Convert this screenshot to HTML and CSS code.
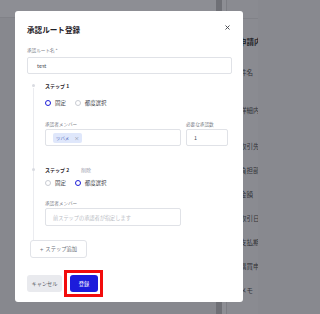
FILE: index.html
```html
<!DOCTYPE html>
<html lang="ja">
<head>
<meta charset="utf-8">
<link rel="stylesheet" href="styles.css">
</head>
<body>
<div class="page">
  <div class="main"><div class="main-top"></div></div>
  <div class="scroll"></div>
  <div class="gutter"></div>
  <aside class="panel">
    <div class="panel-top"></div>
    <div class="panel-title">申請内容</div>
    <div class="panel-row r1">件名</div>
    <div class="panel-row r2">詳細内容</div>
    <div class="panel-row r3">取引先</div>
    <div class="panel-row r4">負担部門</div>
    <div class="panel-row r4">金額</div>
    <div class="panel-row r4">取引日</div>
    <div class="panel-row r4">支払期日</div>
    <div class="panel-row r4">購買申請</div>
    <div class="panel-row r4">メモ</div>
  </aside>
</div>

<div class="modal">
  <div class="modal-head">
    <h1 class="title">承認ルート登録</h1>
    <svg class="close" width="5" height="5" viewBox="0 0 5 5"><path d="M0.5 0.5L4.5 4.5M4.5 0.5L0.5 4.5" stroke="#3d3f46" stroke-width="0.9" fill="none"/></svg>
  </div>
  <div class="label first">承認ルート名 *</div>
  <div class="input name">test</div>

  <div class="steps">
    <div class="step">
      <div class="step-head"><span class="dot"></span><span class="step-name">ステップ 1</span></div>
      <div class="radios">
        <label class="radio"><span class="circle on"></span>固定</label>
        <label class="radio"><span class="circle"></span>都度選択</label>
      </div>
      <div class="fields">
        <div class="field">
          <div class="label">承認者メンバー</div>
          <div class="input box"><span class="chip">ツバメ<span class="x">×</span></span></div>
        </div>
        <div class="field">
          <div class="label">必要な承認数</div>
          <div class="input box num">1</div>
        </div>
      </div>
    </div>
    <div class="step second">
      <div class="step-head"><span class="dot"></span><span class="step-name">ステップ 2</span><span class="del">削除</span></div>
      <div class="radios">
        <label class="radio"><span class="circle"></span>固定</label>
        <label class="radio"><span class="circle on"></span>都度選択</label>
      </div>
      <div class="field single">
        <div class="label">承認者メンバー</div>
        <div class="input box placeholder">前ステップの承認者が指定します</div>
      </div>
    </div>
  </div>

  <button class="add"><span class="plus">+</span>ステップ追加</button>

  <div class="footer">
    <button class="btn cancel">キャンセル</button>
    <span class="highlight"><button class="btn primary">登録</button></span>
  </div>
</div>
</body>
</html>
```

FILE: styles.css
```css
* { box-sizing: border-box; }
html, body {
  margin: 0;
  padding: 0;
}
body {
  width: 258px;
  height: 314px;
  overflow: hidden;
  position: relative;
  background: #88898f;
  font-family: "Noto Sans CJK JP", "Noto Sans", sans-serif;
}
.page {
  display: flex;
  width: 258px;
  height: 314px;
}
.main {
  width: 216px;
  background: #87888e;
}
.main-top {
  height: 18px;
  background: #8d8e94;
  border-bottom: 1px solid #818288;
}
.scroll {
  width: 6px;
  background: #6f7076;
}
.gutter {
  width: 4px;
  background: #8d8e94;
}
.panel {
  flex: 1;
  border-left: 1px solid #7d7e84;
  background: #8a8b91;
  white-space: nowrap;
  overflow: hidden;
  color: #33343a;
  font-size: 6.5px;
  line-height: 8px;
}
.panel-top {
  height: 19px;
  border-bottom: 1px solid #818288;
}
.panel-title {
  padding-left: 12px;
  margin-top: 18px;
  font-size: 7.5px;
  line-height: 10px;
  font-weight: 700;
  color: #26272c;
}
.panel-row { padding-left: 13px; }
.r1 { margin-top: 21px; }
.r2 { margin-top: 30px; }
.r3 { margin-top: 28px; }
.r4 { margin-top: 16px; }

/* modal */
.modal {
  position: absolute;
  left: 15px;
  top: 11px;
  width: 228px;
  height: 291px;
  background: #fff;
  border-radius: 3px;
  padding: 13px 11px 7px 12px;
  color: #1f2128;
}
.modal-head {
  display: flex;
  justify-content: space-between;
  align-items: center;
  height: 12px;
}
.title {
  margin: 0;
  font-size: 7.6px;
  line-height: 12px;
  font-weight: 700;
  color: #1f2128;
}
.close {
  display: block;
  margin-right: 2px;
  margin-top: -6px;
}
.label {
  font-size: 4.6px;
  line-height: 7px;
  color: #7b7e87;
  margin-bottom: 1px;
}
.label.first {
  margin-top: 11px;
  margin-bottom: 3px;
}
.input {
  border: 1px solid #e0e2e7;
  border-radius: 2px;
  height: 17px;
  display: flex;
  align-items: center;
  font-size: 5.4px;
  color: #4a4d55;
}
.input.name {
  padding-left: 9px;
}
.steps {
  position: relative;
  margin-top: 7px;
  padding-left: 18px;
  padding-right: 4px;
  padding-bottom: 14px;
}
.steps::before {
  content: "";
  position: absolute;
  left: 6px;
  top: 7px;
  bottom: 0;
  width: 1px;
  background: #ebecf0;
}
.step-head {
  position: relative;
  display: flex;
  align-items: center;
  height: 8px;
  gap: 12px;
}
.dot {
  position: absolute;
  left: -13.5px;
  top: 2.5px;
  width: 3px;
  height: 3px;
  border-radius: 50%;
  background: #d9dbe1;
}
.step-name {
  font-size: 5px;
  font-weight: 700;
  color: #1f2128;
}
.del {
  font-size: 5px;
  color: #9ea2ad;
}
.radios {
  display: flex;
  align-items: center;
  gap: 9px;
  height: 8px;
  margin-top: 10px;
}
.radio {
  display: flex;
  align-items: center;
  gap: 4px;
  font-size: 5.4px;
  color: #3a3d45;
}
.circle {
  width: 6px;
  height: 6px;
  border-radius: 50%;
  border: 0.8px solid #c9ccd3;
  background: #fff;
}
.circle.on {
  border: 1.8px solid #1d1dd8;
}
.fields {
  display: grid;
  grid-template-columns: 136px 42px;
  gap: 5px;
  margin-top: 14px;
}
.single {
  width: 136px;
  margin-top: 13px;
}
.second { margin-top: 19px; }
.second .radios { margin-top: 6px; }
.box {
  padding-left: 7px;
}
.single .box {
  height: 18px;
}
.chip {
  display: inline-flex;
  align-items: center;
  gap: 5px;
  height: 10px;
  padding: 0 3px;
  background: #dfe7fb;
  border-radius: 2px;
  font-size: 4.4px;
  color: #3f5bb8;
}
.x {
  font-size: 5px;
  color: #7d8392;
}
.placeholder {
  color: #b9bcc4;
  font-size: 5.2px;
}
.add {
  display: flex;
  align-items: center;
  height: 18px;
  width: 57px;
  margin-left: 3px;
  padding: 0 0 0 9px;
  border: 1px solid #e1e3e8;
  border-radius: 3px;
  background: #fff;
  font-family: inherit;
  font-size: 5.3px;
  color: #6b6f7a;
}
.plus {
  font-size: 6px;
  margin-right: 2px;
}
.footer {
  display: flex;
  align-items: center;
  gap: 2px;
  margin-top: 12px;
}
.btn {
  display: block;
  height: 17px;
  border: none;
  border-radius: 3px;
  padding: 0;
  font-family: inherit;
  font-size: 5.2px;
}
.cancel {
  width: 35px;
  background: #e9eaee;
  color: #5a5d66;
}
.highlight {
  display: block;
  border: 3px solid #f20c0c;
  padding: 2px 2px 2px 3px;
}
.primary {
  width: 28px;
  background: #1c1cdb;
  color: #fff;
}
```
